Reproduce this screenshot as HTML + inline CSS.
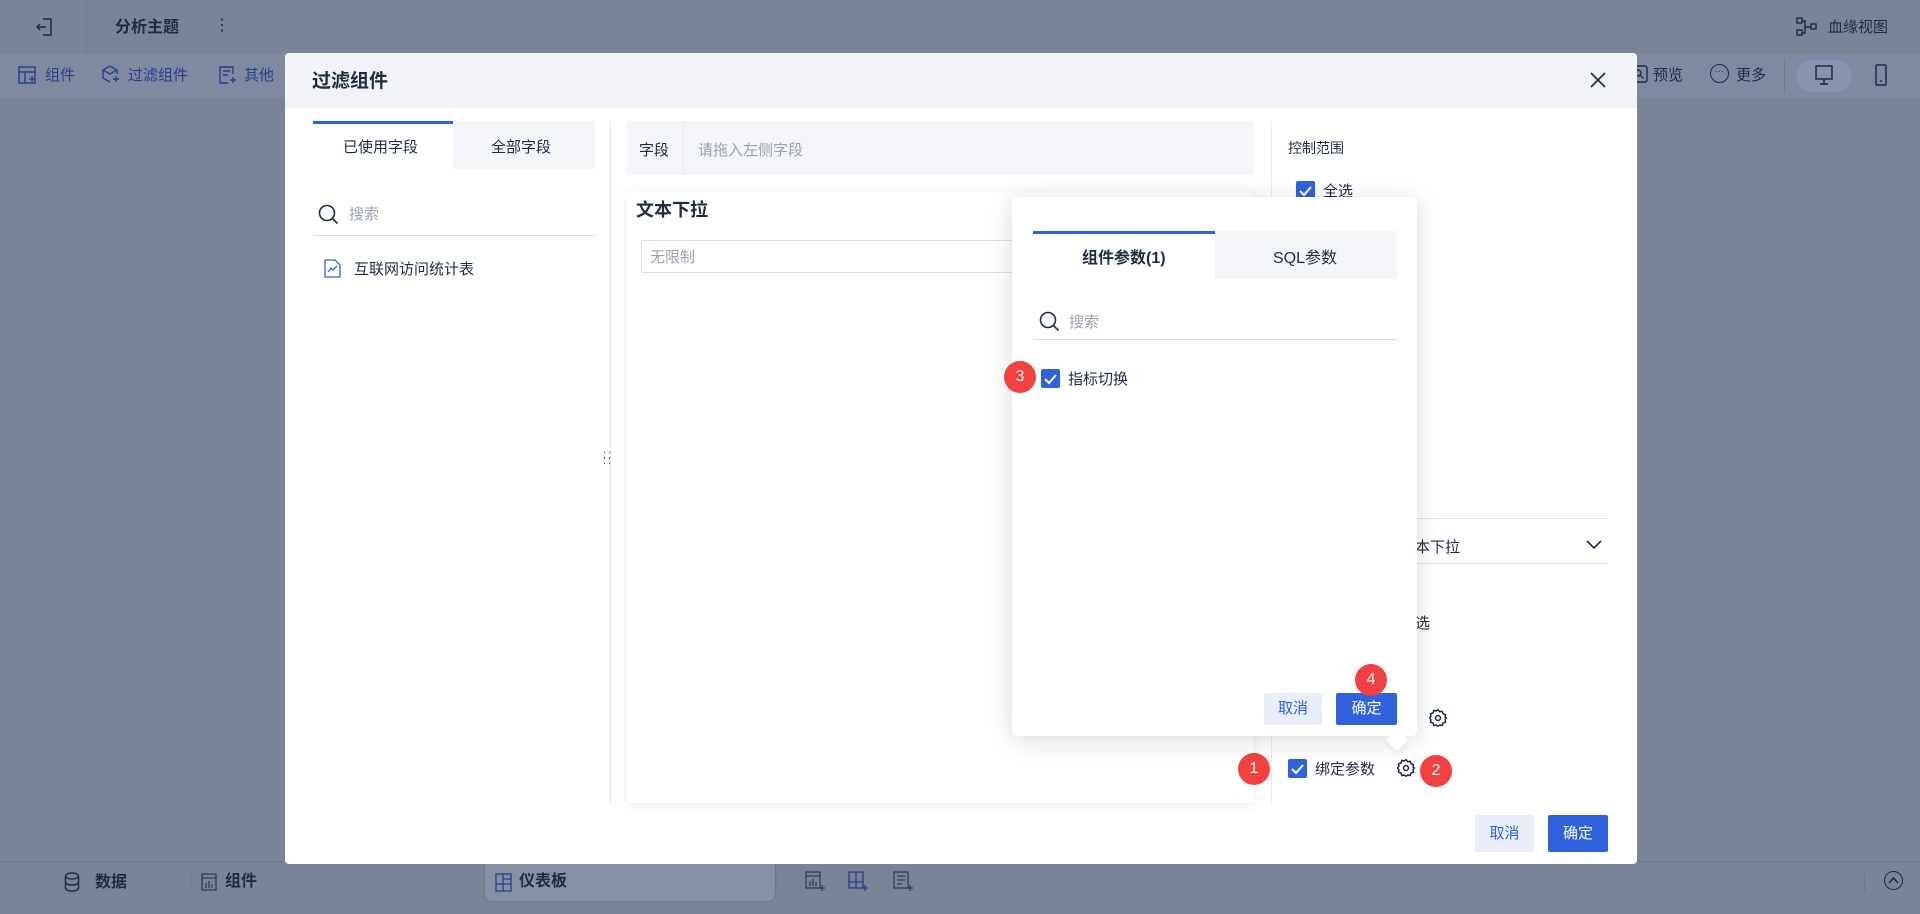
<!DOCTYPE html>
<html><head><meta charset="utf-8"><style>
*{box-sizing:border-box;margin:0;padding:0}
body{width:1920px;height:914px;overflow:hidden;background:#7b8496;font-family:"Liberation Sans","Noto Sans CJK SC",sans-serif;color:#1f2a44;position:relative;font-size:15px}
.a{position:absolute}
.t{position:absolute;white-space:nowrap;line-height:1;margin-top:1px}
.cb{position:absolute;width:19px;height:19px;background:#2f62dc;border-radius:2px}
.cb svg{display:block}
.badge{position:absolute;width:32px;height:32px;border-radius:50%;background:#f34040;color:#fff;font-size:16px;text-align:center;line-height:32px}
.btnc{position:absolute;background:#e8edf9;color:#2f62dc;border-radius:2px;text-align:center;font-size:15px}
.btno{position:absolute;background:#2f62dc;color:#fff;border-radius:2px;text-align:center;font-size:15px}
</style></head><body>
<div class="a" style="left:0;top:54px;width:1920px;height:44px;background:#8189a0"></div>
<div class="a" style="left:86px;top:0;width:1px;height:54px;background:#747d90"></div>
<svg class="a" style="left:36px;top:17px" width="18" height="20" viewBox="0 0 18 20" fill="none" stroke="#1f2a44" stroke-width="1.5"><path d="M7 2h8v16H7M1 10h9M4 7l-3 3 3 3"/></svg>
<div class="t" style="left:115px;top:19px;font-size:16px;font-weight:bold">分析主题</div>
<div class="t" style="left:214px;top:17px;font-size:16px">⋮</div>
<svg class="a" style="left:1796px;top:17px" width="22" height="20" viewBox="0 0 22 20" fill="none" stroke="#1f2a44" stroke-width="1.4"><rect x="1" y="1" width="5" height="5"/><rect x="1" y="13" width="5" height="5"/><rect x="15" y="7" width="5" height="5"/><path d="M6 4h3v12H6M9 10h6"/></svg>
<div class="t" style="left:1828px;top:19px;font-size:15px">血缘视图</div>
<svg class="a" style="left:18px;top:66px" width="18" height="18" viewBox="0 0 18 18" fill="none" stroke="#2a3f8c" stroke-width="1.4"><rect x="1" y="1" width="16" height="16"/><path d="M1 6h16M7 6v11M11 13h6M14 10v6"/></svg>
<div class="t" style="left:45px;top:67px;color:#2a3f8c">组件</div>
<svg class="a" style="left:101px;top:65px" width="18" height="19" viewBox="0 0 18 19" fill="none" stroke="#2a3f8c" stroke-width="1.4"><path d="M9 1l7 4v4M9 1L2 5v8l7 4M2 5l7 4 7-4M12 14h6M15 11v6"/></svg>
<div class="t" style="left:128px;top:67px;color:#2a3f8c">过滤组件</div>
<svg class="a" style="left:219px;top:66px" width="18" height="18" viewBox="0 0 18 18" fill="none" stroke="#2a3f8c" stroke-width="1.4"><path d="M14 8V1H1v16h8M4 5h7M4 9h5M11 14h6M14 11v6"/></svg>
<div class="t" style="left:244px;top:67px;color:#2a3f8c">其他</div>
<svg class="a" style="left:1630px;top:65px" width="18" height="18" viewBox="0 0 18 18" fill="none" stroke="#1f2a44" stroke-width="1.4"><rect x="1" y="1" width="16" height="16" rx="2"/><circle cx="8" cy="8" r="3"/><path d="M10.5 10.5l3 3"/></svg>
<div class="t" style="left:1653px;top:67px;color:#1f2a44">预览</div>
<div class="a" style="left:1710px;top:64px;width:19px;height:19px;border:1.5px solid #1f2a44;border-radius:50%;font-size:9px;text-align:center;line-height:12px">···</div>
<div class="t" style="left:1736px;top:67px">更多</div>
<div class="a" style="left:1784px;top:58px;width:1px;height:36px;background:#717a8d"></div>
<div class="a" style="left:1796px;top:59px;width:56px;height:34px;border-radius:17px;background:#8893ad;border:1px solid #7b8cb8"></div>
<svg class="a" style="left:1815px;top:65px" width="18" height="20" viewBox="0 0 18 20" fill="none" stroke="#1f2a44" stroke-width="1.5"><rect x="1" y="1" width="16" height="13"/><path d="M9 14v5M5 19h8"/></svg>
<svg class="a" style="left:1875px;top:64px" width="12" height="22" viewBox="0 0 12 22" fill="none" stroke="#1f2a44" stroke-width="1.5"><rect x="1" y="1" width="10" height="20" rx="1"/><path d="M5 17h2"/></svg>
<div class="a" style="left:0;top:861px;width:1920px;height:1px;background:#6e778a"></div>
<svg class="a" style="left:64px;top:872px" width="16" height="20" viewBox="0 0 16 20" fill="none" stroke="#1f2a44" stroke-width="1.5"><ellipse cx="8" cy="4" rx="6.5" ry="3"/><path d="M1.5 4v12c0 1.7 2.9 3 6.5 3s6.5-1.3 6.5-3V4M1.5 10c0 1.7 2.9 3 6.5 3s6.5-1.3 6.5-3"/></svg>
<div class="t" style="left:95px;top:874px;font-size:16px;font-weight:bold">数据</div>
<div class="a" style="left:190px;top:873px;width:1px;height:18px;background:#6e778a"></div>
<svg class="a" style="left:201px;top:873px" width="16" height="18" viewBox="0 0 16 18" fill="none" stroke="#26415f" stroke-width="1.3"><rect x="1" y="1" width="14" height="16"/><path d="M1 5h14M5 15v-5M8 15V8M11 15v-4"/></svg>
<div class="t" style="left:225px;top:873px;font-size:16px;font-weight:bold">组件</div>
<div class="a" style="left:484px;top:862px;width:292px;height:40px;background:#878fa2;border:1px solid #6f788c;border-top:none;border-radius:0 0 8px 8px"></div>
<svg class="a" style="left:495px;top:873px" width="17" height="19" viewBox="0 0 17 19" fill="none" stroke="#2a3f8c" stroke-width="1.3"><rect x="1" y="1" width="15" height="17"/><path d="M1 11h15M8 1v17M8 6h8"/></svg>
<div class="t" style="left:519px;top:873px;font-size:16px;font-weight:bold">仪表板</div>
<div class="a" style="left:777px;top:873px;width:1px;height:18px;background:#6e778a"></div>
<svg class="a" style="left:805px;top:871px" width="20" height="20" viewBox="0 0 20 20" fill="none" stroke="#26415f" stroke-width="1.3"><rect x="1" y="1" width="14" height="16"/><path d="M1 5h14M5 15v-5M8 15V8M11 15v-4M14 17h6M17 14v6"/></svg>
<svg class="a" style="left:848px;top:871px" width="20" height="20" viewBox="0 0 20 20" fill="none" stroke="#2a3f8c" stroke-width="1.3"><rect x="1" y="1" width="14" height="16"/><path d="M1 11h14M8 1v16M14 17h6M17 14v6"/></svg>
<svg class="a" style="left:893px;top:871px" width="20" height="20" viewBox="0 0 20 20" fill="none" stroke="#26415f" stroke-width="1.3"><rect x="1" y="1" width="14" height="16"/><path d="M4 5h8M4 9h8M4 13h5M14 17h6M17 14v6"/></svg>
<div class="a" style="left:1864px;top:873px;width:1px;height:18px;background:#6e778a"></div>
<div class="a" style="left:1884px;top:871px;width:19px;height:19px;border:1.5px solid #1f2a44;border-radius:50%"></div>
<svg class="a" style="left:1888px;top:876px" width="11" height="8" viewBox="0 0 11 8" fill="none" stroke="#1f2a44" stroke-width="1.5"><path d="M1 7l4.5-5 4.5 5"/></svg>

<div class="a" style="left:285px;top:53px;width:1352px;height:811px;background:#fff;border-radius:4px;overflow:hidden">
 <div class="a" style="left:0;top:0;width:1352px;height:55px;background:#f2f3f7"></div>
</div>
<div class="t" style="left:312px;top:71px;font-size:19px;font-weight:bold">过滤组件</div>
<svg class="a" style="left:1590px;top:72px" width="16" height="16" viewBox="0 0 16 16" stroke="#1f2a44" stroke-width="1.6"><path d="M1 1l14 14M15 1L1 15"/></svg>
<div class="a" style="left:313px;top:121px;width:140px;height:48px;border-top:3px solid #2f62dc"></div>
<div class="t" style="left:343px;top:139px;font-size:15px">已使用字段</div>
<div class="a" style="left:453px;top:121px;width:142px;height:48px;background:#f5f6fa"></div>
<div class="t" style="left:491px;top:139px;font-size:15px">全部字段</div>
<svg class="a" style="left:318px;top:204px" width="21" height="21" viewBox="0 0 21 21" fill="none" stroke="#1f2a44" stroke-width="1.6"><circle cx="9" cy="9" r="7.5"/><path d="M14.5 14.5l5 5"/></svg>
<div class="t" style="left:349px;top:206px;color:#9aa1ae">搜索</div>
<div class="a" style="left:313px;top:235px;width:282px;height:1px;background:#dcdfe6"></div>
<svg class="a" style="left:324px;top:259px" width="17" height="19" viewBox="0 0 17 19" fill="none" stroke="#2f62dc" stroke-width="1.3"><path d="M1 1h10l5 5v12H1z"/><path d="M4 13l3-4 2 2 4-4"/></svg>
<div class="t" style="left:354px;top:261px;font-size:15px">互联网访问统计表</div>
<div class="a" style="left:610px;top:121px;width:1px;height:682px;background:#e8eaee"></div>
<div class="t" style="left:603px;top:451px;font-size:11px;color:#555;letter-spacing:2px;line-height:6px;width:10px;white-space:normal">::<br>::</div>
<div class="a" style="left:627px;top:121px;width:627px;height:54px;background:#f5f6fa"></div>
<div class="a" style="left:683px;top:121px;width:1px;height:54px;background:#e8eaee"></div>
<div class="t" style="left:639px;top:142px">字段</div>
<div class="t" style="left:698px;top:142px;color:#9aa1ae">请拖入左侧字段</div>
<div class="a" style="left:627px;top:191px;width:627px;height:612px;background:#fff;border-radius:6px;box-shadow:0 2px 12px rgba(0,0,0,.08)"></div>
<div class="t" style="left:636px;top:200px;font-size:18px;font-weight:bold">文本下拉</div>
<div class="a" style="left:641px;top:240px;width:400px;height:33px;border:1px solid #dcdfe6;border-radius:2px"></div>
<div class="t" style="left:650px;top:249px;color:#9aa1ae">无限制</div>
<div class="a" style="left:1271px;top:121px;width:1px;height:682px;background:#e8eaee"></div>
<div class="t" style="left:1288px;top:140px;font-size:14px">控制范围</div>
<div class="cb" style="left:1296px;top:181px"><svg width="19" height="19" viewBox="0 0 19 19" fill="none" stroke="#fff" stroke-width="2"><path d="M4 10l4 4 7-8"/></svg></div>
<div class="t" style="left:1323px;top:183px;font-size:15px">全选</div>
<div class="a" style="left:1272px;top:518px;width:336px;height:1px;background:#e2e4ea"></div>
<div class="t" style="left:1400px;top:539px">文本下拉</div>
<svg class="a" style="left:1586px;top:540px" width="16" height="10" viewBox="0 0 16 10" fill="none" stroke="#1f2a44" stroke-width="1.6"><path d="M1 1l7 7 7-7"/></svg>
<div class="a" style="left:1272px;top:563px;width:336px;height:1px;background:#e2e4ea"></div>
<div class="t" style="left:1400px;top:615px">全选</div>
<svg class="a" style="left:1428px;top:708px" width="20" height="20" viewBox="0 0 24 24" fill="none" stroke="#1f2a44" stroke-width="1.8"><circle cx="12" cy="12" r="3"/><path d="M12 2l2 2.5 3-.5 1 3 3 1-.5 3L22 12l-1.5 2 .5 3-3 1-1 3-3-.5L12 22l-2-1.5-3 .5-1-3-3-1 .5-3L2 12l1.5-2L3 7l3-1 1-3 3 .5z"/></svg>
<div class="cb" style="left:1288px;top:759px"><svg width="19" height="19" viewBox="0 0 19 19" fill="none" stroke="#fff" stroke-width="2"><path d="M4 10l4 4 7-8"/></svg></div>
<div class="t" style="left:1315px;top:761px;font-size:15px">绑定参数</div>
<svg class="a" style="left:1396px;top:758px" width="20" height="20" viewBox="0 0 24 24" fill="none" stroke="#1f2a44" stroke-width="1.8"><circle cx="12" cy="12" r="3"/><path d="M12 2l2 2.5 3-.5 1 3 3 1-.5 3L22 12l-1.5 2 .5 3-3 1-1 3-3-.5L12 22l-2-1.5-3 .5-1-3-3-1 .5-3L2 12l1.5-2L3 7l3-1 1-3 3 .5z"/></svg>
<div class="btnc" style="left:1475px;top:815px;width:59px;height:37px;line-height:37px">取消</div>
<div class="btno" style="left:1548px;top:815px;width:60px;height:37px;line-height:37px">确定</div>

<div class="a" style="left:1012px;top:197px;width:405px;height:539px;background:#fff;border-radius:5px;box-shadow:0 4px 24px rgba(0,0,0,.15)"></div>
<div class="a" style="left:1389px;top:732px;width:16px;height:16px;background:#fff;transform:rotate(45deg);box-shadow:3px 3px 5px rgba(0,0,0,.06)"></div>
<div class="a" style="left:1033px;top:231px;width:182px;height:48px;border-top:3px solid #2f62dc"></div>
<div class="t" style="left:1082px;top:250px;font-size:16px;font-weight:bold">组件参数(1)</div>
<div class="a" style="left:1215px;top:231px;width:182px;height:48px;background:#f5f6fa"></div>
<div class="t" style="left:1273px;top:250px;font-size:16px">SQL参数</div>
<svg class="a" style="left:1039px;top:311px" width="21" height="21" viewBox="0 0 21 21" fill="none" stroke="#1f2a44" stroke-width="1.6"><circle cx="9" cy="9" r="7.5"/><path d="M14.5 14.5l5 5"/></svg>
<div class="t" style="left:1069px;top:314px;color:#9aa1ae">搜索</div>
<div class="a" style="left:1033px;top:339px;width:364px;height:1px;background:#dcdfe6"></div>
<div class="cb" style="left:1041px;top:369px"><svg width="19" height="19" viewBox="0 0 19 19" fill="none" stroke="#fff" stroke-width="2"><path d="M4 10l4 4 7-8"/></svg></div>
<div class="t" style="left:1068px;top:371px;font-size:15px">指标切换</div>
<div class="btnc" style="left:1264px;top:693px;width:58px;height:32px;line-height:32px">取消</div>
<div class="btno" style="left:1336px;top:693px;width:61px;height:32px;line-height:32px">确定</div>

<div class="badge" style="left:1238px;top:753px">1</div>
<div class="badge" style="left:1420px;top:755px">2</div>
<div class="badge" style="left:1004px;top:361px">3</div>
<div class="badge" style="left:1355px;top:664px">4</div>
</body></html>
